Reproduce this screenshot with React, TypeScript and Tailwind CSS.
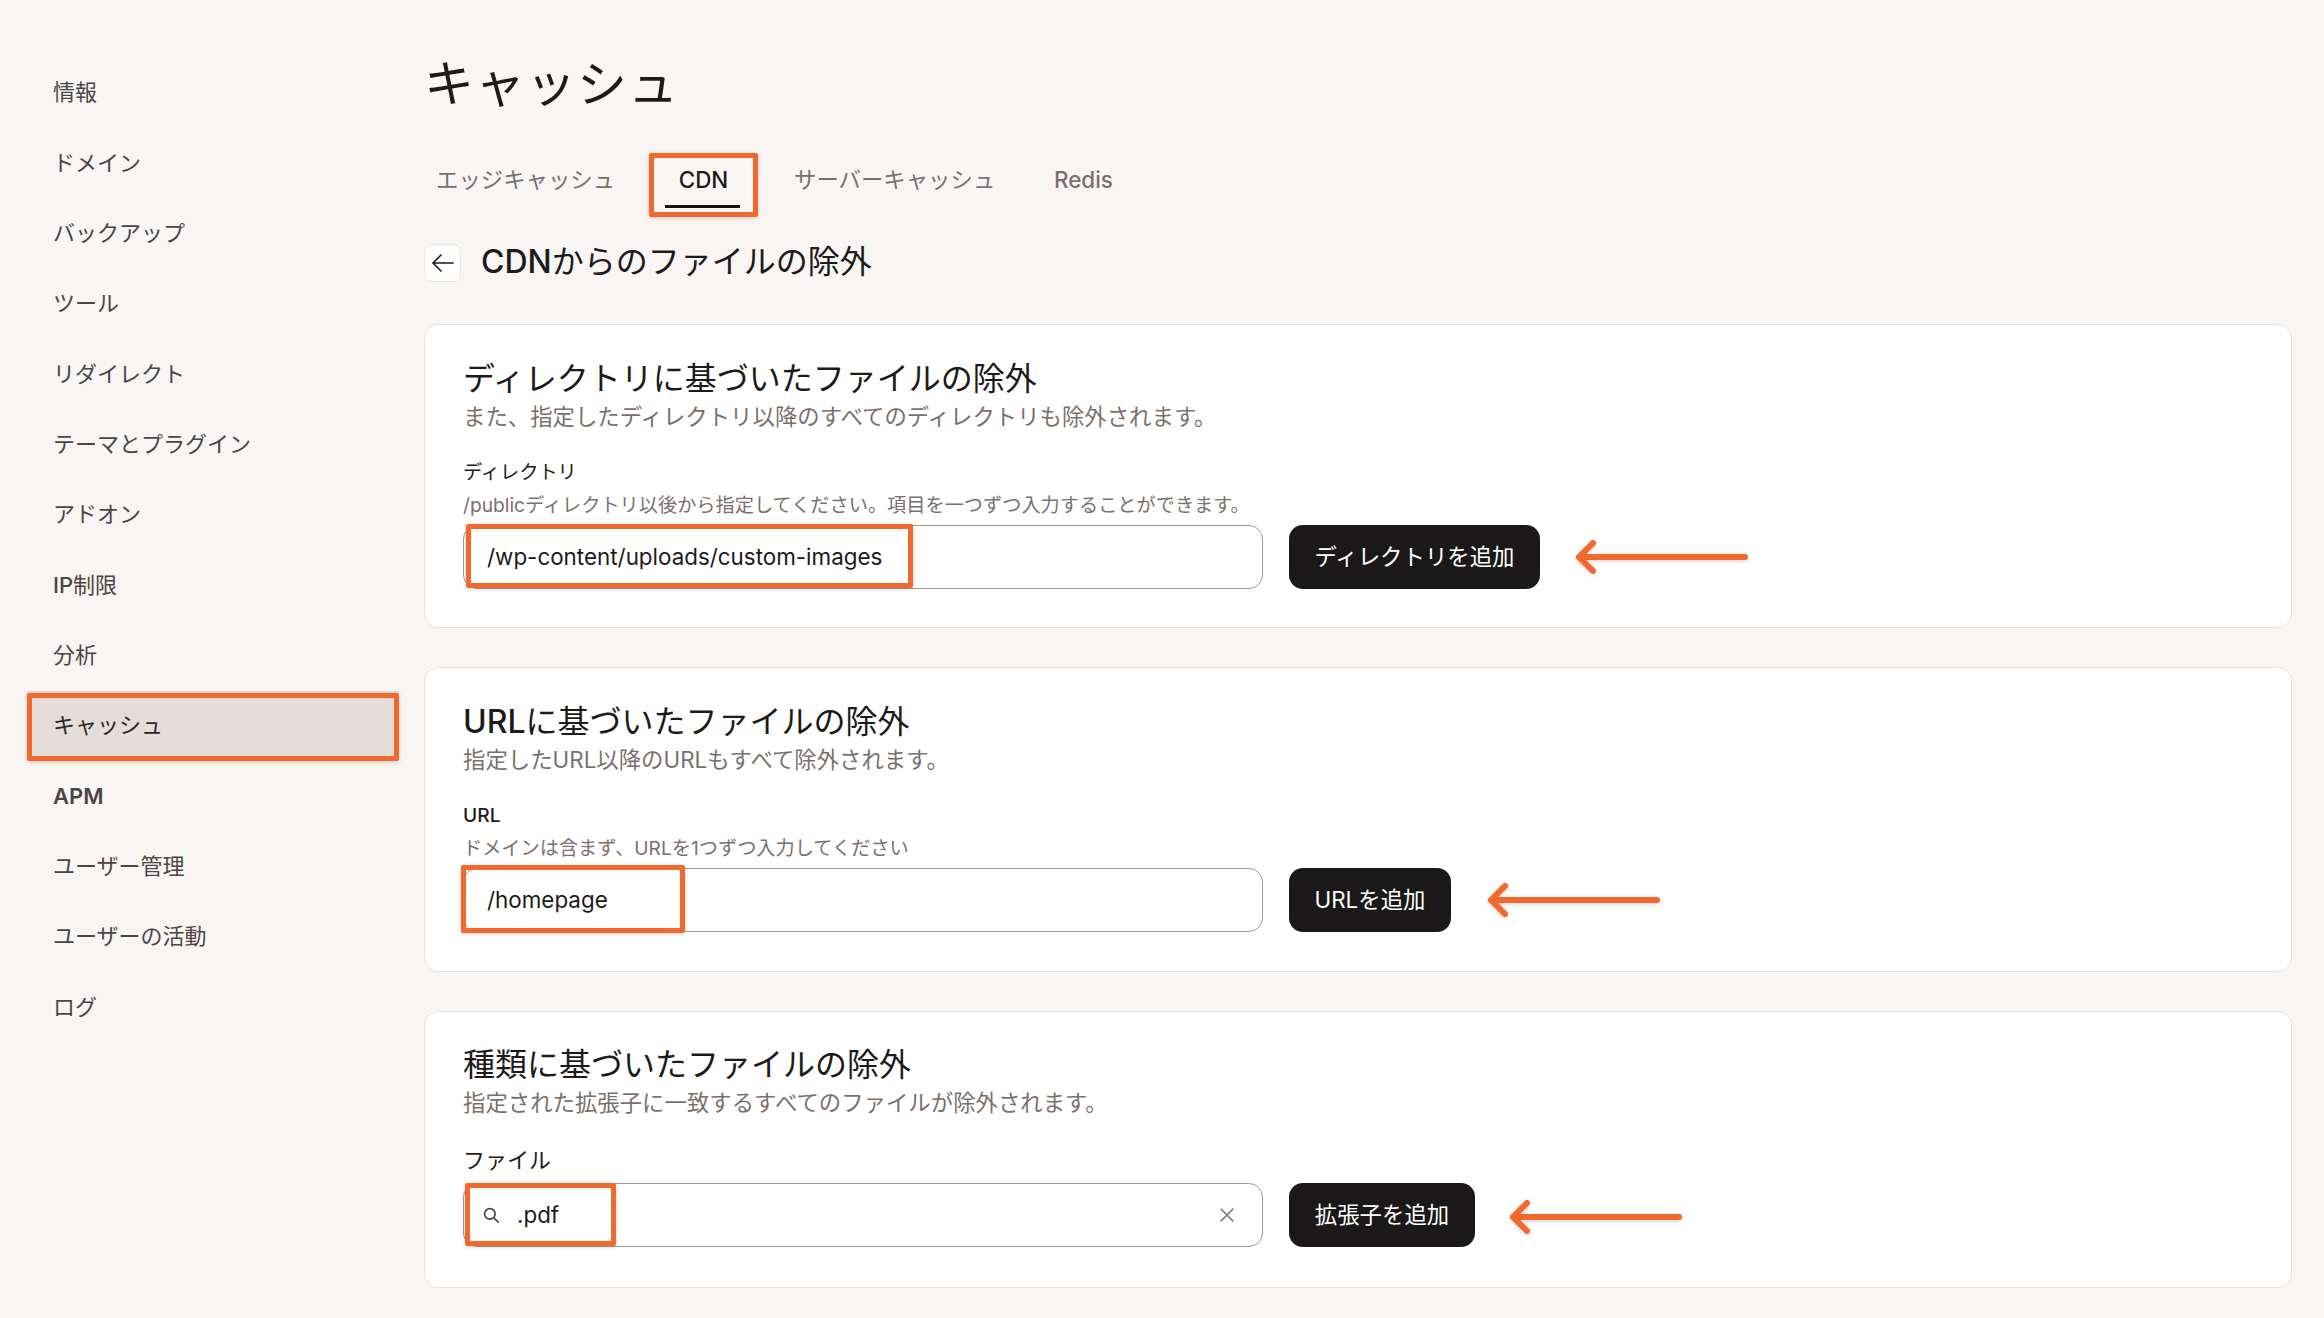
import React from "react";

const font = { fontFamily: '"Inter","Noto Sans CJK JP",sans-serif' };
const nav = ["情報","ドメイン","バックアップ","ツール","リダイレクト","テーマとプラグイン","アドオン","IP制限","分析","キャッシュ","APM","ユーザー管理","ユーザーの活動","ログ"];

function Mark({ className }: { className: string }) {
  return <div className={"absolute border-[5px] border-[#f2692e] rounded-[2px] shadow-[0_1px_4px_rgba(0,0,0,0.18)] pointer-events-none " + className} />;
}

function Arrow({ className }: { className: string }) {
  return (
    <svg width="172" height="40" viewBox="0 0 172 40" fill="none" className={"shrink-0 drop-shadow-[0_1px_2px_rgba(0,0,0,0.2)] " + className}>
      <path d="M3 20H169M17 6L3 20L17 34" stroke="#f2692e" strokeWidth="6" strokeLinecap="round" strokeLinejoin="round" />
    </svg>
  );
}

function Card({ title, sub, className, children }: { title: React.ReactNode; sub: string; className: string; children: React.ReactNode }) {
  return (
    <section className={"bg-white border border-[#e8e2de] rounded-[14px] px-[38px] " + className}>
      <h2 className="text-[32px] leading-[44px] text-[#1d1a1a] font-normal">{title}</h2>
      <p className="text-[22.4px] leading-[32px] text-[#7c6f6c]">{sub}</p>
      {children}
    </section>
  );
}

function Row({ value, button, btnW, arrowGap, mark, search }: { value: string; button: string; btnW: string; arrowGap: string; mark: string; search?: boolean }) {
  return (
    <div className="flex items-center">
      <div className="relative w-[800px] h-[64px] bg-white border border-[#a39896] rounded-[14px] flex items-center">
        {search ? (
          <>
            <svg width="18" height="18" viewBox="0 0 24 24" fill="none" stroke="#4a4341" strokeWidth="2.2" className="ml-[18px] shrink-0">
              <circle cx="10.5" cy="10.5" r="7" />
              <path d="M16 16l5.5 5.5" strokeLinecap="round" />
            </svg>
            <span className="ml-[17px] text-[22.4px] text-[#1d1a1a]">{value}</span>
            <svg width="20" height="20" viewBox="0 0 24 24" fill="none" stroke="#8a7f7c" strokeWidth="2" strokeLinecap="round" className="ml-auto mr-[25px]">
              <path d="M5 5l14 14M19 5L5 19" />
            </svg>
          </>
        ) : (
          <span className="ml-[23px] text-[22.4px] text-[#1d1a1a]">{value}</span>
        )}
        <Mark className={mark} />
      </div>
      <div className={"ml-[26px] h-[64px] bg-[#1a1818] rounded-[14px] flex items-center justify-center text-white text-[22.4px] " + btnW}>{button}</div>
      <Arrow className={arrowGap} />
    </div>
  );
}

export default function App() {
  return (
    <div style={font} className="flex w-[2324px] h-[1318px] overflow-hidden bg-[#f8f5f3]">
      <aside className="w-[424px] shrink-0 pt-[57.5px] pl-[27px] pr-[25px]">
        {nav.map((n) => {
          const active = n === "キャッシュ";
          return (
            <div key={n} className={"relative h-[70.35px] flex items-center px-[26px] text-[22px] " + (active ? "bg-[#e7ddd8] text-[#2b2725]" : "text-[#4c4543]") + (n === "APM" ? " font-semibold" : "")}>
              {n === "IP制限" ? <><span className="font-medium">IP</span>制限</> : n}
              {active && <Mark className="inset-x-0 top-[2px] bottom-0" />}
            </div>
          );
        })}
      </aside>
      <main className="flex-1 pr-[32px] min-w-0">
        <h1 className="mt-[46px] text-[50px] leading-[76px] tracking-[1px] text-[#1d1a1a] font-normal">キャッシュ</h1>
        <div className="mt-[31px] flex items-start h-[64px] text-[22.4px]">
          <div className="mt-[10px] ml-[12px] text-[#7c6f6c] w-[176px] whitespace-nowrap">エッジキャッシュ</div>
          <div className="relative ml-[37px] w-[109px] h-[64px] flex flex-col items-center pt-[10px] font-medium text-[#1d1a1a]">
            CDN
            <div className="absolute left-[16px] right-[18px] top-[52px] h-[3px] bg-[#141212]" />
            <Mark className="inset-0" />
          </div>
          <div className="mt-[10px] ml-[36px] text-[#7c6f6c] w-[198px] whitespace-nowrap">サーバーキャッシュ</div>
          <div className="mt-[10px] ml-[62px] text-[#7c6f6c] font-medium">Redis</div>
        </div>
        <div className="mt-[27px] flex items-center h-[38px]">
          <div className="w-[37px] h-[38px] bg-white border border-[#eae3df] rounded-[8px] flex items-center justify-center">
            <svg width="24" height="24" viewBox="0 0 24 24" fill="none" stroke="#1d1a1a" strokeWidth="1.7" strokeLinecap="round" strokeLinejoin="round">
              <path d="M22 12H2M10 4l-8 8 8 8" />
            </svg>
          </div>
          <div className="ml-[20px] -mt-[3px] text-[32px] text-[#1d1a1a]"><span className="font-medium">CDN</span>からのファイルの除外</div>
        </div>
        <Card title="ディレクトリに基づいたファイルの除外" sub="また、指定したディレクトリ以降のすべてのディレクトリも除外されます。" className="mt-[42px] h-[304px] pt-[32px]">
          <div className="mt-[25px] text-[19.2px] leading-[28px] text-[#1d1a1a]">ディレクトリ</div>
          <div className="mt-[5px] mb-[6px] text-[19.2px] leading-[28px] text-[#7c6f6c]">/publicディレクトリ以後から指定してください。項目を一つずつ入力することができます。</div>
          <Row value="/wp-content/uploads/custom-images" button="ディレクトリを追加" btnW="w-[251px]" arrowGap="ml-[36px]" mark="left-[2px] w-[447px] -top-[2px] bottom-0" />
        </Card>
        <Card title={<><span className="font-medium">URL</span>に基づいたファイルの除外</>} sub="指定したURL以降のURLもすべて除外されます。" className="mt-[39px] h-[305px] pt-[32px]">
          <div className="mt-[25px] text-[19.2px] leading-[28px] text-[#1d1a1a] font-medium">URL</div>
          <div className="mt-[5px] mb-[6px] text-[19.2px] leading-[28px] text-[#7c6f6c]">ドメインは含まず、URLを1つずつ入力してください</div>
          <Row value="/homepage" button="URLを追加" btnW="w-[162px]" arrowGap="ml-[37px]" mark="-left-[3px] w-[224px] -top-[4px] -bottom-[2px]" />
        </Card>
        <Card title="種類に基づいたファイルの除外" sub="指定された拡張子に一致するすべてのファイルが除外されます。" className="mt-[39px] h-[277px] pt-[31px]">
          <div className="mt-[25px] text-[22px] leading-[32px] text-[#1d1a1a]">ファイル</div>
          <div className="mt-[7px]">
            <Row search value=".pdf" button="拡張子を追加" btnW="w-[186px]" arrowGap="ml-[35px] mt-[3px]" mark="left-[1px] w-[151px] -top-[1px] bottom-0" />
          </div>
        </Card>
      </main>
    </div>
  );
}
